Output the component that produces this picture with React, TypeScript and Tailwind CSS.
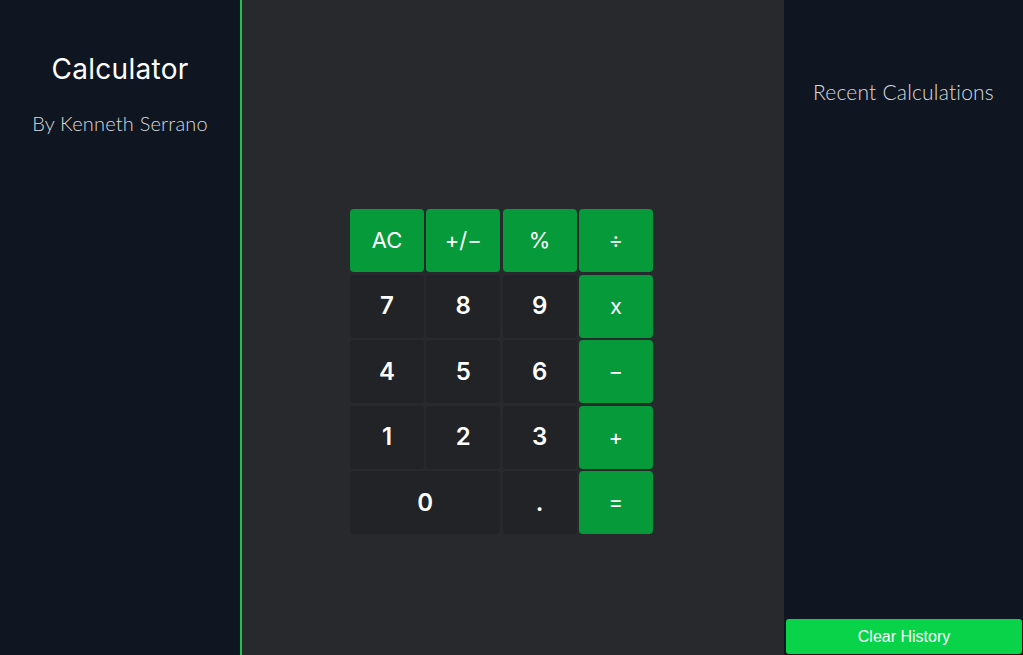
import React from 'react';

type Key = { label: string; kind: 'op' | 'num'; wide?: boolean };

const keys: Key[] = [
  { label: 'AC', kind: 'op' },
  { label: '+/−', kind: 'op' },
  { label: '%', kind: 'op' },
  { label: '÷', kind: 'op' },
  { label: '7', kind: 'num' },
  { label: '8', kind: 'num' },
  { label: '9', kind: 'num' },
  { label: 'x', kind: 'op' },
  { label: '4', kind: 'num' },
  { label: '5', kind: 'num' },
  { label: '6', kind: 'num' },
  { label: '−', kind: 'op' },
  { label: '1', kind: 'num' },
  { label: '2', kind: 'num' },
  { label: '3', kind: 'num' },
  { label: '+', kind: 'op' },
  { label: '0', kind: 'num', wide: true },
  { label: '.', kind: 'num' },
  { label: '=', kind: 'op' },
];

export default function App() {
  return (
    <div className="flex h-[655px] w-full overflow-hidden font-['Inter',sans-serif] text-white">
      {/* Left sidebar */}
      <aside className="flex w-[242px] shrink-0 flex-col items-center border-r-2 border-[#1ec24e] bg-[#0f1621] pt-[51px]">
        <h1 className="text-[28px] leading-9 font-normal tracking-[0.3px]">Calculator</h1>
        <p className="mt-[21px] font-['Lato',sans-serif] text-[20px] font-light tracking-[0.2px] text-[#d8dade]">
          By Kenneth Serrano
        </p>
      </aside>

      {/* Calculator */}
      <main className="flex flex-1 justify-start bg-[#27292d] pt-[209px] pl-[108px]">
        <div className="grid h-fit grid-cols-[repeat(4,74px)] grid-rows-[repeat(5,63px)] gap-x-[2.3px] gap-y-[2.5px]">
          {keys.map((k) => (
            <button
              key={k.label}
              className={`flex items-center justify-center rounded-[4px] ${
                k.wide ? 'col-span-2' : ''
              } ${
                k.kind === 'op'
                  ? 'bg-[#079a3b] text-[22px] font-normal'
                  : 'bg-[#222327] text-[24px] font-semibold'
              }`}
            >
              {k.label}
            </button>
          ))}
        </div>
      </main>

      {/* Right sidebar */}
      <aside className="flex w-[239px] shrink-0 flex-col bg-[#0f1621]">
        <h2 className="pt-[76px] text-center font-['Lato',sans-serif] text-[21px] font-light tracking-[0.2px] text-[#d8dade]">
          Recent Calculations
        </h2>
        <div className="flex-1" />
        <button className="ml-[2px] mr-[1px] mb-[1px] h-[35px] rounded-[3px] bg-[#08d349] font-['Liberation_Sans',sans-serif] text-[16px] text-white">
          Clear History
        </button>
      </aside>
    </div>
  );
}
